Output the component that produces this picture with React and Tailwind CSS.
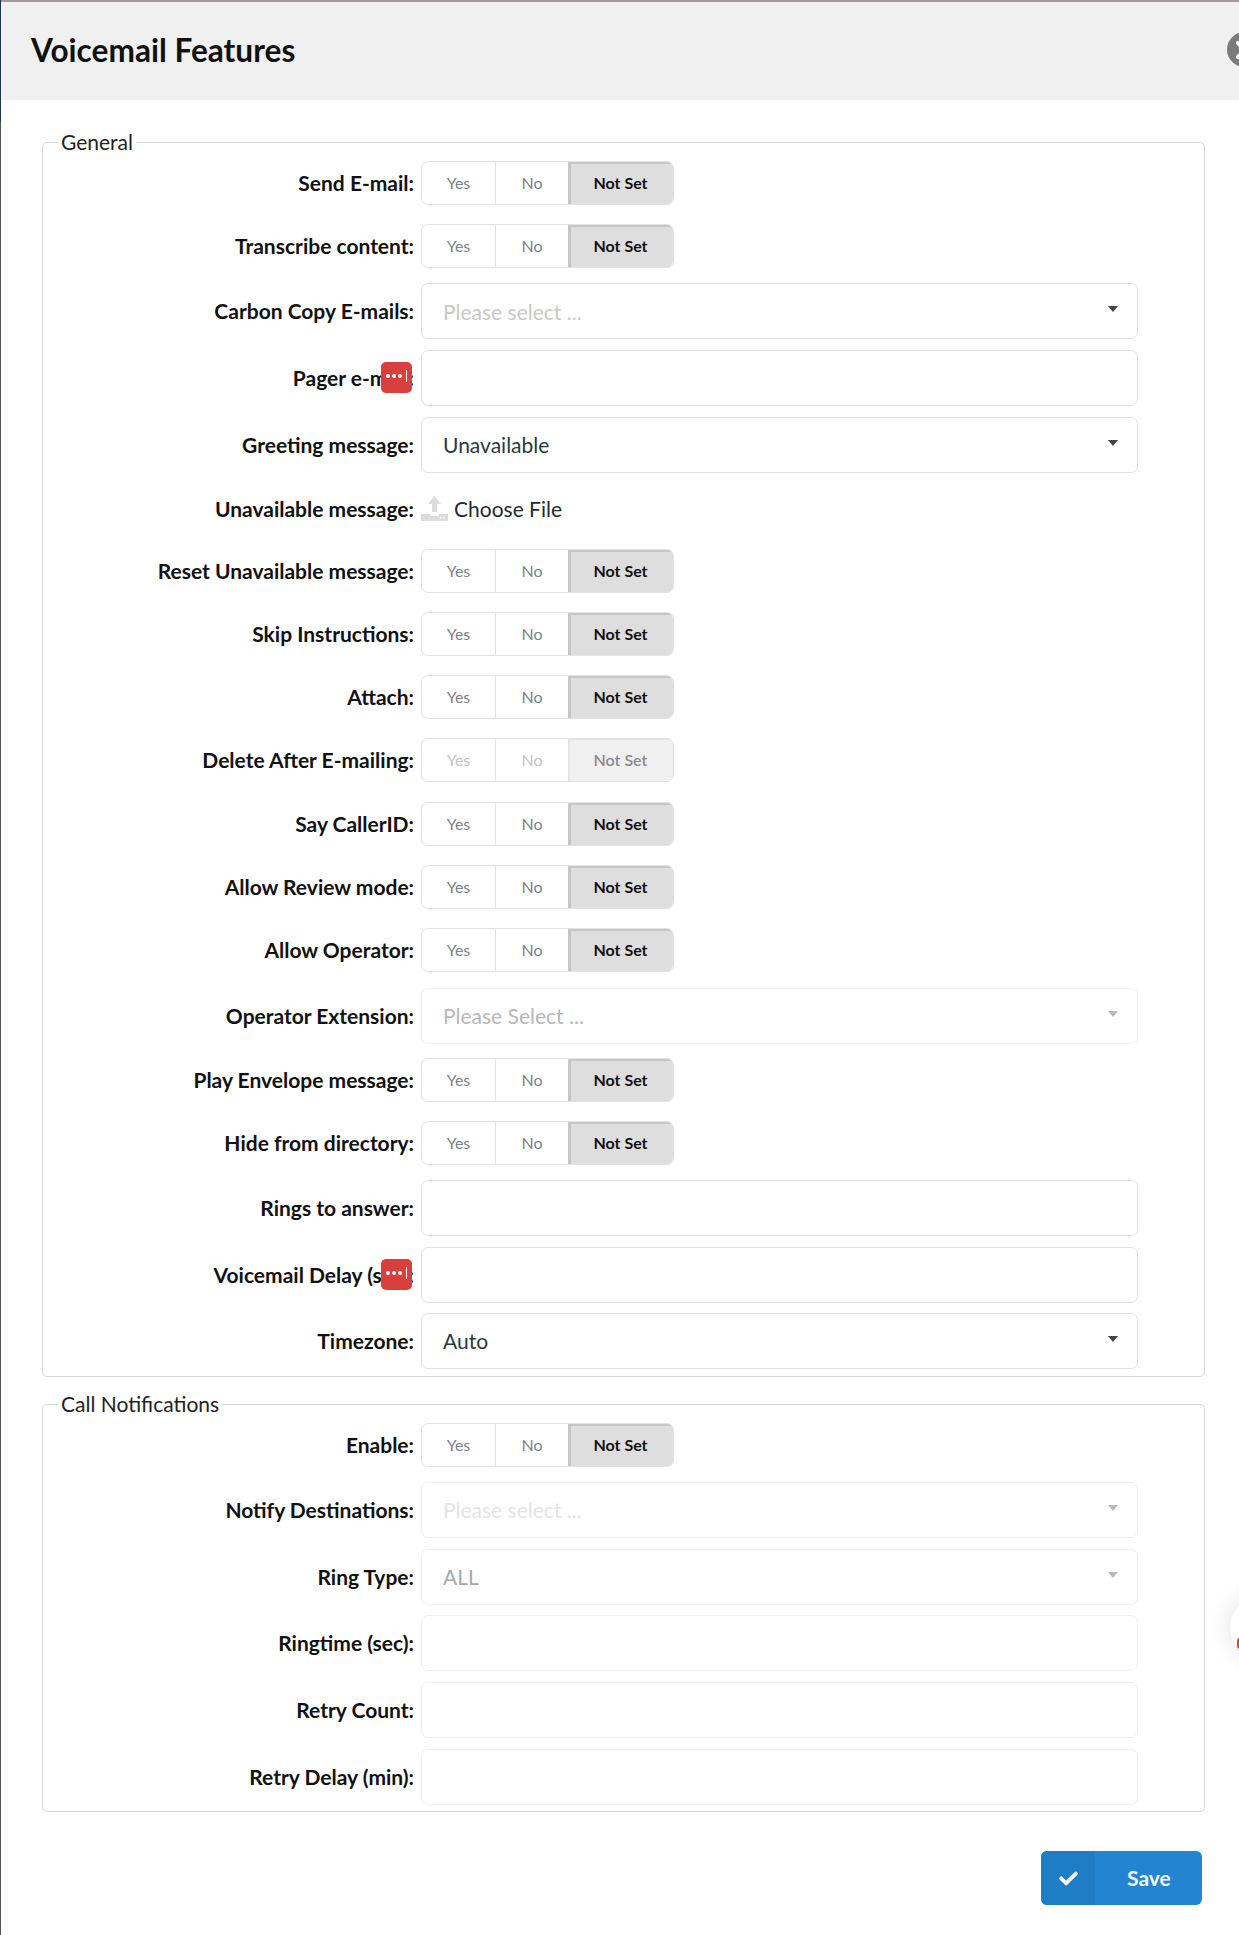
import { X } from "lucide-react";
import { FaCheck } from "react-icons/fa";

const labelClass =
  "w-[371px] shrink-0 text-right text-[21px] leading-[24px] font-bold text-[#111] mr-[7px] relative";

function Row({ label, mask, children }) {
  return (
    <div className="flex items-center mb-[10.6px]">
      <label className={labelClass}>
        {label}
        {mask && (
          <span className="absolute right-[2px] top-[-4px] w-[31px] h-[31px] rounded-[5px] bg-[#d93f3c] flex items-center justify-center gap-[2px] pb-[2px]">
            <i className="w-[4px] h-[4px] rounded-full bg-white" />
            <i className="w-[4px] h-[4px] rounded-full bg-white" />
            <i className="w-[4px] h-[4px] rounded-full bg-white" />
            <i className="w-[1px] h-[12px] ml-[2px] bg-white" />
          </span>
        )}
      </label>
      {children}
    </div>
  );
}

function Toggle({ label, disabled }) {
  return (
    <div className="pt-[4px] pb-[4.6px]">
      <Row label={label}>
        <div className="flex w-[253px] h-[44px] rounded-[7px] border border-[#e2e2e2] overflow-hidden text-[16px]">
          <div className={`w-[74px] flex items-center justify-center border-r border-[#e2e2e2] ${disabled ? "text-[#c4c4c4]" : "text-[#7d8288]"}`}>Yes</div>
          <div className={`w-[72px] flex items-center justify-center ${disabled ? "text-[#c4c4c4]" : "text-[#7d8288]"}`}>No</div>
          {disabled ? (
            <div className="flex-1 flex items-center justify-center bg-[#f0f0f0] font-semibold text-[#8a8a8a] shadow-[inset_2px_1px_0_#e4e4e4]">Not Set</div>
          ) : (
            <div className="flex-1 flex items-center justify-center bg-[#dedede] font-bold text-[#111] shadow-[inset_3px_2px_0_#c6c6c6]">Not Set</div>
          )}
        </div>
      </Row>
    </div>
  );
}

function Caret({ light }) {
  return (
    <span className={`absolute right-[19px] top-[22px] w-0 h-0 border-x-[5.5px] border-x-transparent border-t-[6px] ${light ? "border-t-[#b8b8b8]" : "border-t-[#444]"}`} />
  );
}

function Field({ label, mask, value, placeholder, select, disabled, textClass }) {
  return (
    <Row label={label} mask={mask}>
      <div className={`relative w-[717px] h-[56px] rounded-[7px] border flex items-center pl-[21px] text-[21px] ${disabled ? "border-[#f0f0f0]" : "border-[#e0e0e0]"}`}>
        {placeholder && <span className={textClass || "text-[#c8c8c8]"}>{placeholder}</span>}
        {value && <span className={textClass || "text-[#2c3840]"}>{value}</span>}
        {select && <Caret light={disabled} />}
      </div>
    </Row>
  );
}

function UploadIcon() {
  return (
    <svg width="27" height="25" viewBox="0 0 27 25" fill="#dcdcdc">
      <path d="M13.5 0 20 8h-4v8h-5V8H7z" />
      <path d="M0 18h9v2h9v-2h9v7H0z" />
      <rect x="19" y="21" width="1.5" height="1.5" fill="#fff" />
      <rect x="22" y="21" width="1.5" height="1.5" fill="#fff" />
    </svg>
  );
}

export default function App() {
  return (
    <div className="relative w-[1239px] h-[1935px] overflow-hidden bg-white font-['Lato',sans-serif]">
      {/* Header */}
      <div className="h-[100px] bg-[#f0f0f0] border-t-2 border-[#a09a9c] flex items-center pl-[31px]">
        <h1 className="text-[31.6px] font-bold text-[#111]">Voicemail Features</h1>
      </div>
      <span className="absolute left-0 top-0 w-[1px] h-[122px] bg-[#1d3557]" />
      <span className="absolute left-0 top-[122px] w-[1px] h-[1813px] bg-[#555]" />
      <span className="absolute left-[1227px] top-[32px] w-[35px] h-[35px] rounded-full bg-[#7b7b7b] flex items-center justify-center text-white">
        <X size={28} strokeWidth={3.5} />
      </span>

      {/* General */}
      <fieldset className="ml-[42px] mr-[34px] mt-[30px] h-[1247px] border border-[#d8d8d8] rounded-[5px]">
        <legend className="ml-[15px] px-[3px] text-[21px] leading-[24px] text-[#222]">General</legend>
        <div className="pt-[3px]">
          <Toggle label="Send E-mail:" />
          <Toggle label="Transcribe content:" />
          <Field label="Carbon Copy E-mails:" placeholder="Please select ..." select />
          <Field label="Pager e-mail:" mask />
          <Field label="Greeting message:" value="Unavailable" select />
          <Row label="Unavailable message:">
            <div className="flex items-center gap-[6px] h-[51px] text-[21px] text-[#1f2a33]">
              <UploadIcon />
              <span>Choose File</span>
            </div>
          </Row>
          <Toggle label="Reset Unavailable message:" />
          <Toggle label="Skip Instructions:" />
          <Toggle label="Attach:" />
          <Toggle label="Delete After E-mailing:" disabled />
          <Toggle label="Say CallerID:" />
          <Toggle label="Allow Review mode:" />
          <Toggle label="Allow Operator:" />
          <div className="mt-[1px] -mb-[1px]">
            <Field label="Operator Extension:" placeholder="Please Select ..." select disabled textClass="text-[#b8b8b8]" />
          </div>
          <Toggle label="Play Envelope message:" />
          <Toggle label="Hide from directory:" />
          <Field label="Rings to answer:" />
          <Field label="Voicemail Delay (sec):" mask />
          <Field label="Timezone:" value="Auto" select />
        </div>
      </fieldset>

      {/* Call Notifications */}
      <fieldset className="ml-[42px] mr-[34px] mt-[15px] h-[420px] border border-[#d8d8d8] rounded-[5px]">
        <legend className="ml-[15px] px-[3px] text-[21px] leading-[24px] text-[#222]">Call Notifications</legend>
        <div className="pt-[3px]">
          <Toggle label="Enable:" />
          <Field label="Notify Destinations:" placeholder="Please select ..." select disabled textClass="text-[#e4e4e4]" />
          <Field label="Ring Type:" value="ALL" select disabled textClass="text-[#a8a8a8]" />
          <Field label="Ringtime (sec):" disabled />
          <Field label="Retry Count:" disabled />
          <Field label="Retry Delay (min):" disabled />
        </div>
      </fieldset>

      {/* Save */}
      <div className="flex justify-end pr-[37px] mt-[39px]">
        <button className="flex w-[161px] h-[54px] rounded-[6px] overflow-hidden bg-[#2385d1] text-[#f2f8fc] text-[21px] font-bold">
          <span className="w-[54px] h-full flex items-center justify-center bg-[#1f7dc5]">
            <FaCheck size={19} />
          </span>
          <span className="flex-1 flex items-center pl-[32px]">Save</span>
        </button>
      </div>

      {/* Floating widget */}
      <span className="absolute left-[1230px] top-[1597px] w-[60px] h-[60px] rounded-full bg-white shadow-[0_0_24px_rgba(0,0,0,0.12)]" />
      <span className="absolute left-[1237px] top-[1638px] w-[6px] h-[11px] rounded-full bg-[#e8461c]" />
    </div>
  );
}
